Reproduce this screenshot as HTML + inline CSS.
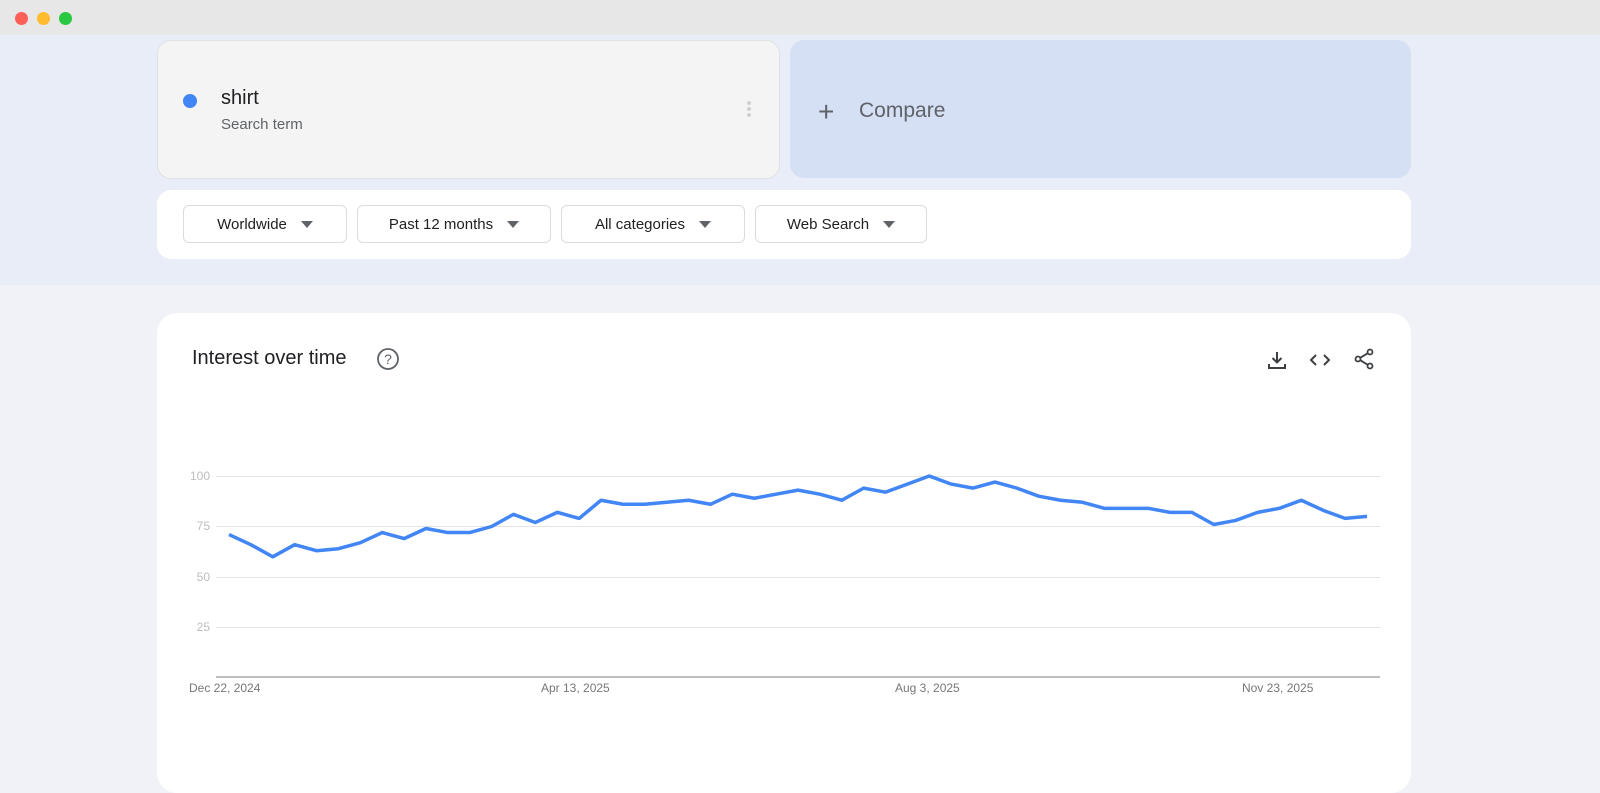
<!DOCTYPE html>
<html><head><meta charset="utf-8"><style>
*{margin:0;padding:0;box-sizing:border-box}
body{width:1600px;height:778px;overflow:hidden;background:#f0f2f8;font-family:"Liberation Sans",Arial,sans-serif;position:relative}
.abs{position:absolute}
.top{left:0;top:0;width:1600px;height:35px;background:#e7e7e7}
.dot{top:12px;width:13px;height:13px;border-radius:50%}
.band{left:0;top:35px;width:1600px;height:250px;background:#e9edf7}
.card{left:157px;top:40px;width:623px;height:139px;background:#f4f4f4;border:1px solid #dfe1e5;border-radius:14px}
.cmp{left:790px;top:40px;width:621px;height:138px;background:#d5e0f5;border-radius:14px}
.filt{left:157px;top:190px;width:1254px;height:69px;background:#fff;border-radius:14px}
.btn{top:205px;height:38px;border:1px solid #dadce0;border-radius:6px;background:#fff;font-size:15px;color:#202124;display:flex;align-items:center;justify-content:center;gap:14px}
.tri{width:0;height:0;border-left:6px solid transparent;border-right:6px solid transparent;border-top:7px solid #5f6368}
.chart{left:157px;top:313px;width:1254px;height:480px;background:#fff;border-radius:20px}
.yl{left:160px;width:50px;text-align:right;font-size:12px;color:#bdbdbd}
.gl{left:216px;width:1164px;height:1px;background:#e4e4e4}
.xl{top:681px;font-size:12px;color:#777}
</style></head><body>
<div class="abs top"></div>
<div class="abs dot" style="left:15px;background:#fe5f57"></div>
<div class="abs dot" style="left:37px;background:#febc2e"></div>
<div class="abs dot" style="left:59px;background:#28c840"></div>
<div class="abs band"></div>
<div class="abs card"></div>
<div class="abs" style="left:183px;top:94px;width:14px;height:14px;border-radius:50%;background:#4285f4"></div>
<div class="abs" style="left:221px;top:87px;font-size:20px;color:#202124">shirt</div>
<div class="abs" style="left:221px;top:116px;font-size:15px;color:#5f6368">Search term</div>
<div class="abs" style="left:747px;top:101px;width:4px;height:4px;border-radius:50%;background:#d0d0d0;box-shadow:0 6px 0 #d0d0d0,0 12px 0 #d0d0d0"></div>
<div class="abs cmp"></div>
<div class="abs" style="left:818px;top:96px;font-size:28px;color:#5f6368;font-weight:300">+</div>
<div class="abs" style="left:859px;top:99px;font-size:21px;color:#5f6368">Compare</div>
<div class="abs filt"></div>
<div class="abs btn" style="left:183px;width:164px">Worldwide<span class="tri"></span></div>
<div class="abs btn" style="left:357px;width:194px">Past 12 months<span class="tri"></span></div>
<div class="abs btn" style="left:561px;width:184px">All categories<span class="tri"></span></div>
<div class="abs btn" style="left:755px;width:172px">Web Search<span class="tri"></span></div>
<div class="abs chart"></div>
<div class="abs" style="left:192px;top:347px;font-size:20px;color:#202124">Interest over time</div>
<svg class="abs" style="left:376px;top:347px" width="24" height="24" viewBox="0 0 24 24"><circle cx="12" cy="12" r="10" fill="none" stroke="#5f6368" stroke-width="1.8"/><text x="12" y="17" text-anchor="middle" font-size="14" fill="#5f6368" font-family="Liberation Sans">?</text></svg>
<svg class="abs" style="left:1265px;top:348px" width="24" height="24" viewBox="0 0 24 24" fill="none" stroke="#3c4043" stroke-width="2"><path d="M12 4v10M7.5 10l4.5 4.5 4.5-4.5M4 16v4h16v-4"/></svg>
<svg class="abs" style="left:1308px;top:348px" width="24" height="24" viewBox="0 0 24 24" fill="none" stroke="#3c4043" stroke-width="2"><path d="M8 7l-5 5 5 5M16 7l5 5-5 5"/></svg>
<svg class="abs" style="left:1352px;top:347px" width="24" height="24" viewBox="0 0 24 24" fill="none" stroke="#3c4043" stroke-width="1.8"><circle cx="18" cy="5" r="2.5"/><circle cx="6" cy="12" r="2.5"/><circle cx="18" cy="19" r="2.5"/><path d="M8.2 10.8l7.6-4.6M8.2 13.2l7.6 4.6"/></svg>
<div class="abs gl" style="top:476px"></div>
<div class="abs gl" style="top:526px"></div>
<div class="abs gl" style="top:577px"></div>
<div class="abs gl" style="top:627px"></div>
<div class="abs" style="left:216px;top:676px;width:1164px;height:2px;background:#bdbdbd"></div>
<div class="abs yl" style="top:469px">100</div>
<div class="abs yl" style="top:519px">75</div>
<div class="abs yl" style="top:570px">50</div>
<div class="abs yl" style="top:620px">25</div>
<div class="abs xl" style="left:189px">Dec 22, 2024</div>
<div class="abs xl" style="left:541px">Apr 13, 2025</div>
<div class="abs xl" style="left:895px">Aug 3, 2025</div>
<div class="abs xl" style="left:1242px">Nov 23, 2025</div>
<svg class="abs" style="left:229px;top:476px;overflow:visible" width="1138" height="202" viewBox="0 0 52 100" preserveAspectRatio="none">
<polyline fill="none" stroke="#4285f4" stroke-width="3.5" stroke-linejoin="round" vector-effect="non-scaling-stroke" points="0,29 1,34 2,40 3,34 4,37 5,36 6,33 7,28 8,31 9,26 10,28 11,28 12,25 13,19 14,23 15,18 16,21 17,12 18,14 19,14 20,13 21,12 22,14 23,9 24,11 25,9 26,7 27,9 28,12 29,6 30,8 31,4 32,0 33,4 34,6 35,3 36,6 37,10 38,12 39,13 40,16 41,16 42,16 43,18 44,18 45,24 46,22 47,18 48,16 49,12 50,17 51,21 52,20"/>
</svg>
</body></html>
